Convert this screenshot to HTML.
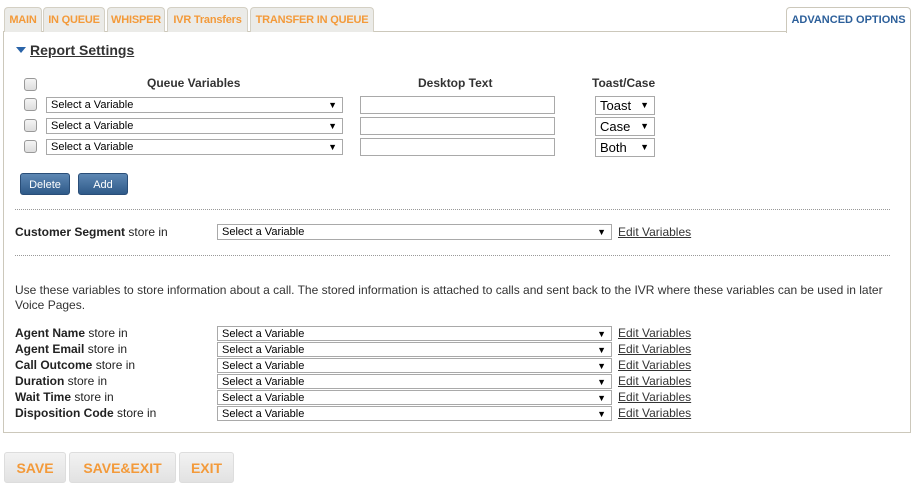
<!DOCTYPE html>
<html><head><style>
*{box-sizing:border-box}
body{margin:0;width:913px;height:485px;background:#fff;font-family:"Liberation Sans",Arial,sans-serif;position:relative;overflow:hidden;color:#333}
.a{position:absolute}
.tab{position:absolute;top:7px;height:25px;border:1px solid #d4d0c4;border-bottom:none;border-radius:4px 4px 0 0;background:#ebebe8;color:#f39a3a;font-weight:bold;font-size:11px;line-height:24px;text-align:center;letter-spacing:-0.2px}
.panel{position:absolute;left:3px;top:31px;width:908px;height:402px;border:1px solid #ccc8bb}
.cb{position:absolute;left:24px;width:13px;height:13px;border:1px solid #999;border-radius:3px;background:linear-gradient(#f4f4f4,#ddd)}
.sel{position:absolute;border:1px solid #a9a9a9;background:#fff;font-size:11px;color:#000;padding-left:4px;line-height:15px}
.sel:after{content:"▼";position:absolute;right:5px;top:0;font-size:9px}
.inp{position:absolute;left:360px;width:195px;height:18px;border:1px solid #a9a9a9}
.tc{position:absolute;left:595px;width:60px;height:19px;border:1px solid #a9a9a9;font-size:13px;color:#000;padding-left:4px;line-height:17px}
.tc:after{content:"▼";position:absolute;right:5px;top:0;font-size:9px}
.btn{position:absolute;top:173px;height:22px;border-radius:3px;background:linear-gradient(#5d87b3,#2f5a89);color:#fff;font-size:11px;line-height:22px;text-align:center;border:1px solid #2a4e78}
.lbl{position:absolute;left:15px;font-size:12px;color:#222}
.lbl b{font-weight:bold}
.ev{position:absolute;left:618px;font-size:12px;color:#333;text-decoration:underline}
.dot{position:absolute;left:15px;width:875px;border-top:1px dotted #999}
.bb{position:absolute;top:452px;height:31px;border:1px solid #ddd;border-radius:3px;background:linear-gradient(#f2f2f2,#e2e2e2);color:#f39a3a;font-weight:bold;font-size:14px;line-height:30px;text-align:center}
</style></head><body>
<div class="panel"></div>
<div class="tab" style="left:4px;width:38px">MAIN</div>
<div class="tab" style="left:43px;width:62px">IN QUEUE</div>
<div class="tab" style="left:107px;width:58px">WHISPER</div>
<div class="tab" style="left:167px;width:81px">IVR Transfers</div>
<div class="tab" style="left:250px;width:124px">TRANSFER IN QUEUE</div>
<div class="a" style="left:786px;top:7px;width:125px;height:26px;background:#fff;border:1px solid #ccc8bb;border-bottom:none;border-radius:4px 4px 0 0;color:#2c5f9a;font-weight:bold;font-size:11px;line-height:24px;text-align:center">ADVANCED OPTIONS</div>
<div class="a" style="left:16px;top:47px;width:0;height:0;border-left:5px solid transparent;border-right:5px solid transparent;border-top:6px solid #2a64a8"></div>
<div class="a" style="left:30px;top:42px;font-size:14px;font-weight:bold;text-decoration:underline;color:#333">Report Settings</div>
<div class="cb" style="top:78px"></div>
<div class="a" style="left:147px;top:76px;font-size:12px;font-weight:bold">Queue Variables</div>
<div class="a" style="left:418px;top:76px;font-size:12px;font-weight:bold">Desktop Text</div>
<div class="a" style="left:592px;top:76px;font-size:12px;font-weight:bold">Toast/Case</div>
<div class="cb" style="top:98px"></div><div class="sel" style="left:46px;top:97px;width:297px;height:16px">Select a Variable</div><div class="inp" style="top:96px"></div><div class="tc" style="top:96px">Toast</div>
<div class="cb" style="top:119px"></div><div class="sel" style="left:46px;top:118px;width:297px;height:16px">Select a Variable</div><div class="inp" style="top:117px"></div><div class="tc" style="top:117px">Case</div>
<div class="cb" style="top:140px"></div><div class="sel" style="left:46px;top:139px;width:297px;height:16px">Select a Variable</div><div class="inp" style="top:138px"></div><div class="tc" style="top:138px">Both</div>
<div class="btn" style="left:20px;width:50px">Delete</div>
<div class="btn" style="left:78px;width:50px">Add</div>
<div class="dot" style="top:209px"></div>
<div class="lbl" style="top:225px"><b>Customer Segment</b> store in</div>
<div class="sel" style="left:217px;top:224px;width:395px;height:16px">Select a Variable</div>
<div class="ev" style="top:225px">Edit Variables</div>
<div class="dot" style="top:255px"></div>
<div class="a" style="left:15px;top:283px;width:885px;font-size:12px;line-height:15px;color:#333">Use these variables to store information about a call. The stored information is attached to calls and sent back to the IVR where these variables can be used in later Voice Pages.</div>
<div class="lbl" style="top:326px"><b>Agent Name</b> store in</div><div class="sel" style="left:217px;top:326px;width:395px;height:15px">Select a Variable</div><div class="ev" style="top:326px">Edit Variables</div>
<div class="lbl" style="top:342px"><b>Agent Email</b> store in</div><div class="sel" style="left:217px;top:342px;width:395px;height:15px">Select a Variable</div><div class="ev" style="top:342px">Edit Variables</div>
<div class="lbl" style="top:358px"><b>Call Outcome</b> store in</div><div class="sel" style="left:217px;top:358px;width:395px;height:15px">Select a Variable</div><div class="ev" style="top:358px">Edit Variables</div>
<div class="lbl" style="top:374px"><b>Duration</b> store in</div><div class="sel" style="left:217px;top:374px;width:395px;height:15px">Select a Variable</div><div class="ev" style="top:374px">Edit Variables</div>
<div class="lbl" style="top:390px"><b>Wait Time</b> store in</div><div class="sel" style="left:217px;top:390px;width:395px;height:15px">Select a Variable</div><div class="ev" style="top:390px">Edit Variables</div>
<div class="lbl" style="top:406px"><b>Disposition Code</b> store in</div><div class="sel" style="left:217px;top:406px;width:395px;height:15px">Select a Variable</div><div class="ev" style="top:406px">Edit Variables</div>
<div class="bb" style="left:4px;width:62px">SAVE</div>
<div class="bb" style="left:69px;width:107px">SAVE&amp;EXIT</div>
<div class="bb" style="left:179px;width:55px">EXIT</div>
</body></html>
